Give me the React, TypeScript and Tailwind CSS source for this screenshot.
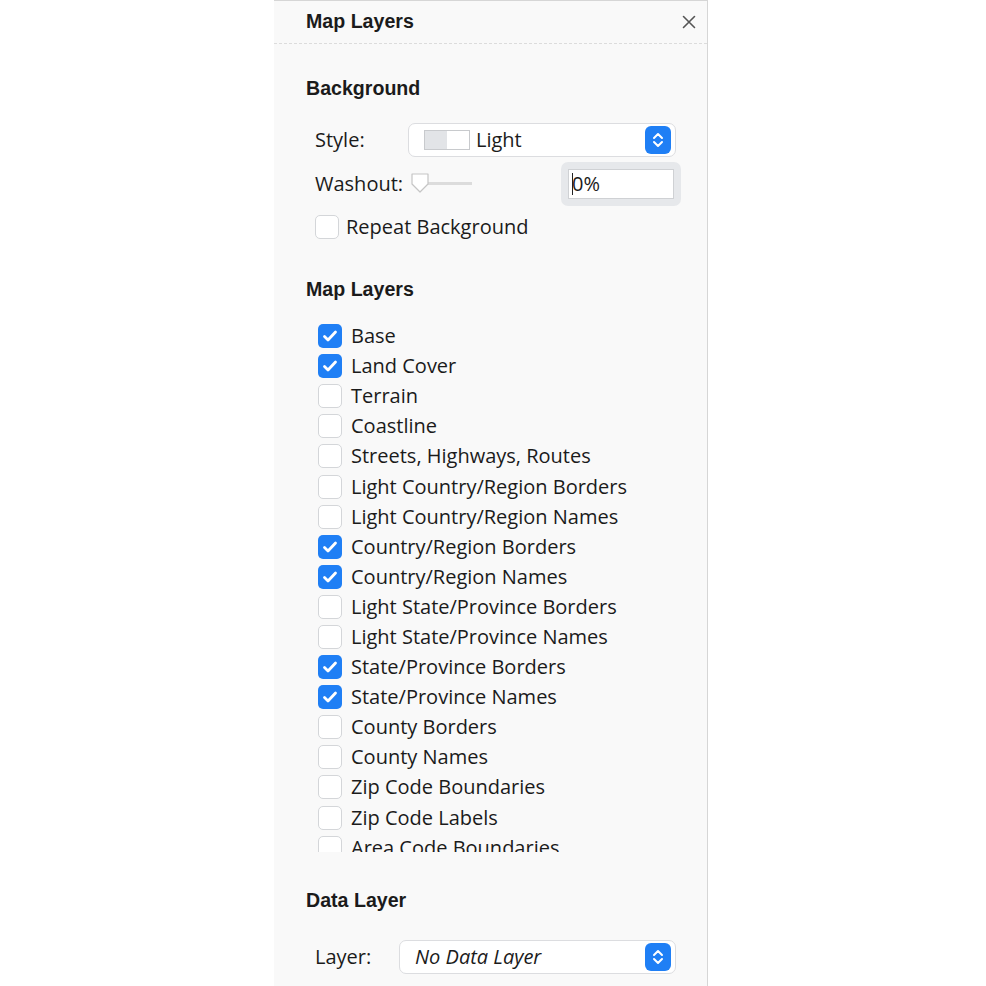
import React from "react";

const layers = [
  { name: "Base", on: true },
  { name: "Land Cover", on: true },
  { name: "Terrain", on: false },
  { name: "Coastline", on: false },
  { name: "Streets, Highways, Routes", on: false },
  { name: "Light Country/Region Borders", on: false },
  { name: "Light Country/Region Names", on: false },
  { name: "Country/Region Borders", on: true },
  { name: "Country/Region Names", on: true },
  { name: "Light State/Province Borders", on: false },
  { name: "Light State/Province Names", on: false },
  { name: "State/Province Borders", on: true },
  { name: "State/Province Names", on: true },
  { name: "County Borders", on: false },
  { name: "County Names", on: false },
  { name: "Zip Code Boundaries", on: false },
  { name: "Zip Code Labels", on: false },
  { name: "Area Code Boundaries", on: false },
];

const Checkbox = ({ on }: { on: boolean }) =>
  on ? (
    <div className="w-[24px] h-[24px] rounded-[5px] bg-[#1f7ff5] flex items-center justify-center shrink-0">
      <svg width="18" height="18" viewBox="0 0 18 18" fill="none">
        <path
          d="M3.5 9.5l3.5 3.5L14.5 5"
          stroke="white"
          strokeWidth="2.8"
          strokeLinecap="round"
          strokeLinejoin="round"
        />
      </svg>
    </div>
  ) : (
    <div className="w-[24px] h-[24px] rounded-[5px] bg-white border border-[#d4d6d9] shrink-0" />
  );

// stepper arrows on the right of the selects
const Stepper = () => (
  <div className="w-[26px] h-[28px] rounded-[6px] bg-[#1f7ff5] flex items-center justify-center shrink-0">
    <svg width="14" height="20" viewBox="0 0 14 20" fill="none">
      <path
        d="M3 8l4-4 4 4M3 12l4 4 4-4"
        stroke="white"
        strokeWidth="2"
        strokeLinecap="round"
        strokeLinejoin="round"
      />
    </svg>
  </div>
);

export default function App() {
  return (
    <div
      className="w-[986px] h-[986px] bg-white overflow-hidden text-[#1b1b1b]"
      style={{ fontFamily: '"Open Sans", "Liberation Sans", sans-serif' }}
    >
      <div className="ml-[274px] w-[434px] h-[986px] bg-[#f9f9f9] border-t border-r border-[#d6d6d6] flex flex-col">
        {/* Header */}
        <div className="h-[43px] shrink-0 flex items-center justify-between pl-[32px] pr-[11px] border-b border-dashed border-[#dcdcdc]">
          <span className="text-[19.6px] font-bold font-['Liberation_Sans']">Map Layers</span>
          <svg width="14" height="14" viewBox="0 0 14 14">
            <path
              d="M1.5 1.5l11 11M12.5 1.5l-11 11"
              stroke="#555"
              strokeWidth="1.6"
              strokeLinecap="round"
            />
          </svg>
        </div>

        {/* Background */}
        <div className="pl-[32px] mt-[33px] h-[24px] flex items-center text-[19.6px] font-bold font-['Liberation_Sans']">
          Background
        </div>

        <div className="mt-[22px] flex items-center h-[34px] pl-[41px] pr-[31px]">
          <span className="text-[20px] w-[93px]">Style:</span>
          <div className="flex-1 h-[34px] bg-white border border-[#dcdde0] rounded-[7px] flex items-center pl-[15px] pr-[4px]">
            <div className="w-[46px] h-[20px] border border-[#c8cacd] flex">
              <div className="w-1/2 bg-[#e2e4e7]" />
              <div className="w-1/2 bg-white" />
            </div>
            <span className="text-[20px] ml-[6px] flex-1">Light</span>
            <Stepper />
          </div>
        </div>

        <div className="mt-[5px] flex items-center h-[44px] pl-[41px] pr-[26px]">
          <span className="text-[20px] w-[95px]">Washout:</span>
          <div className="relative w-[64px] h-[30px] flex items-center">
            <div className="absolute left-[14px] top-[13px] w-[48px] h-[3px] bg-[#dcdcdc]" />
            <svg className="absolute left-0 top-[3px]" width="20" height="22" viewBox="0 0 20 22">
              <path
                d="M2 2h16v10l-8 8-8-8z"
                fill="white"
                stroke="#c5c5c5"
                strokeWidth="1.2"
                strokeLinejoin="round"
              />
            </svg>
          </div>
          <div className="ml-auto w-[120px] h-[44px] rounded-[7px] bg-[#e6e8eb] p-[7px]">
            <div className="w-full h-full bg-white border border-[#cfd1d4] flex items-center pl-[3px]">
              <span className="w-[1px] h-[22px] bg-[#222]" />
              <span className="text-[20px] -ml-[1px]">0%</span>
            </div>
          </div>
        </div>

        <div className="mt-[9px] flex items-center h-[24px] pl-[41px] gap-[7px]">
          <Checkbox on={false} />
          <span className="text-[20px]">Repeat Background</span>
        </div>

        {/* Map Layers */}
        <div className="pl-[32px] mt-[39px] h-[24px] flex items-center text-[19.6px] font-bold font-['Liberation_Sans']">
          Map Layers
        </div>

        <div className="mt-[19px] h-[531px] overflow-hidden pl-[44px] shrink-0">
          {layers.map((l) => (
            <div key={l.name} className="h-[30.1px] flex items-center gap-[9px]">
              <Checkbox on={l.on} />
              <span className="text-[20px] whitespace-nowrap">{l.name}</span>
            </div>
          ))}
        </div>

        {/* Data Layer */}
        <div className="pl-[32px] mt-[37px] h-[24px] flex items-center text-[19.6px] font-bold font-['Liberation_Sans']">
          Data Layer
        </div>

        <div className="mt-[27px] flex items-center h-[34px] pl-[41px] pr-[31px]">
          <span className="text-[20px] w-[84px]">Layer:</span>
          <div className="flex-1 h-[34px] bg-white border border-[#dcdde0] rounded-[7px] flex items-center pl-[15px] pr-[4px]">
            <span className="text-[20px] italic flex-1">No Data Layer</span>
            <Stepper />
          </div>
        </div>
      </div>
    </div>
  );
}
